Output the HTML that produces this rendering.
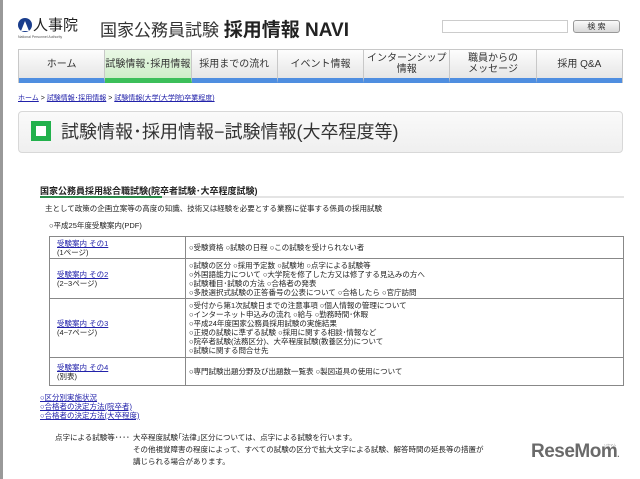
<!DOCTYPE html>
<html><head><meta charset="utf-8"><style>
*{margin:0;padding:0;box-sizing:border-box}
body{width:640px;height:479px;background:#fff;font-family:"Liberation Sans","Noto Sans CJK JP",sans-serif;position:relative;overflow:hidden;color:#222}
.abs{position:absolute}
.lb{position:absolute;left:0;top:0;width:3px;height:479px;background:#999}
.nav{position:absolute;left:18px;top:49px;width:605px;height:34px;display:flex;border:1px solid #c8c8c8;border-bottom:none}
.nav div{flex:1;border-right:1px solid #c8c8c8;background:linear-gradient(#fdfdfd,#e6e6e6);font-size:10px;display:flex;align-items:center;justify-content:center;text-align:center;line-height:11px;border-bottom:5px solid #4f8ee0;color:#333}
.nav div:last-child{border-right:none}
.nav div.on{background:linear-gradient(#eaf8e6,#cfeec9);border-bottom-color:#3cbf5a}
a{color:#2222aa;text-decoration:underline}
table{border-collapse:collapse;position:absolute;left:49px;top:236px;width:575px;font-size:7.5px;line-height:9px;table-layout:fixed}
td{border:1px solid #888;vertical-align:middle;padding:0 3px;overflow:hidden}
td.l{width:136px;padding-left:7px}
</style></head><body>
<div class="lb"></div>
<div class="abs" style="left:18px;top:18px;width:14px;height:14px;border-radius:50%;background:#1a3d8c"></div>
<div class="abs" style="left:21px;top:21px;width:0;height:0;border-left:4px solid transparent;border-right:4px solid transparent;border-bottom:10px solid #fff"></div>
<div class="abs" style="left:33px;top:14px;font-size:15px;color:#222">人事院</div>
<div class="abs" style="left:18px;top:35px;font-size:3.5px;color:#555">National Personnel Authority</div>
<div class="abs" style="left:100px;top:15px;font-size:17px;color:#333;white-space:nowrap">国家公務員試験 <b style="font-size:19px;color:#222">採用情報 NAVI</b></div>
<div class="abs" style="left:442px;top:20px;width:126px;height:13px;border:1px solid #ccc;background:#fff"></div>
<div class="abs" style="left:573px;top:20px;width:47px;height:13px;border:1px solid #999;border-radius:3px;background:linear-gradient(#fafafa,#d8d8d8);font-size:8px;text-align:center;line-height:11px;color:#333">検 索</div>
<div class="nav"><div>ホーム</div><div class="on">試験情報･採用情報</div><div>採用までの流れ</div><div>イベント情報</div><div>インターンシップ<br>情報</div><div>職員からの<br>メッセージ</div><div>採用 Q&amp;A</div></div>
<div class="abs" style="left:18px;top:93px;font-size:7px;white-space:nowrap"><a>ホーム</a> &gt; <a>試験情報･採用情報</a> &gt; <a>試験情報(大学(大学院)卒業程度)</a></div>
<div class="abs" style="left:18px;top:111px;width:605px;height:42px;border:1px solid #d8d8d8;border-radius:4px;background:linear-gradient(#fafafa,#efefef)"></div>
<div class="abs" style="left:31px;top:121px;width:20px;height:20px;background:#22b14c"></div>
<div class="abs" style="left:36px;top:126px;width:10px;height:10px;background:#fff"></div>
<div class="abs" style="left:61px;top:118px;font-size:18px;color:#333;white-space:nowrap">試験情報･採用情報−試験情報(大卒程度等)</div>
<div class="abs" style="left:40px;top:184px;font-size:9px;font-weight:bold;color:#222;white-space:nowrap">国家公務員採用総合職試験(院卒者試験･大卒程度試験)</div>
<div class="abs" style="left:40px;top:196px;width:584px;height:2px;background:#e4e4e4"></div>
<div class="abs" style="left:40px;top:196px;width:122px;height:2px;background:#2a8a4a"></div>
<div class="abs" style="left:45px;top:203px;font-size:7.5px;white-space:nowrap">主として政策の企画立案等の高度の知識、技術又は経験を必要とする業務に従事する係員の採用試験</div>
<div class="abs" style="left:49px;top:220px;font-size:7.5px;white-space:nowrap">○平成25年度受験案内(PDF)</div>
<table>
<tr style="height:22px"><td class="l"><a>受験案内 その1</a><br>(1ページ)</td><td>○受験資格 ○試験の日程 ○この試験を受けられない者</td></tr>
<tr style="height:40px"><td class="l"><a>受験案内 その2</a><br>(2~3ページ)</td><td>○試験の区分 ○採用予定数 ○試験地 ○点字による試験等<br>○外国語能力について ○大学院を修了した方又は修了する見込みの方へ<br>○試験種目･試験の方法 ○合格者の発表<br>○多肢選択式試験の正答番号の公表について ○合格したら ○官庁訪問</td></tr>
<tr style="height:59px"><td class="l"><a>受験案内 その3</a><br>(4~7ページ)</td><td>○受付から第1次試験日までの注意事項 ○個人情報の管理について<br>○インターネット申込みの流れ ○給与 ○勤務時間･休暇<br>○平成24年度国家公務員採用試験の実施結果<br>○正規の試験に準ずる試験 ○採用に関する相談･情報など<br>○院卒者試験(法務区分)、大卒程度試験(教養区分)について<br>○試験に関する問合せ先</td></tr>
<tr style="height:28px"><td class="l"><a>受験案内 その4</a><br>(別表)</td><td>○専門試験出題分野及び出題数一覧表 ○製図道具の使用について</td></tr>
</table>
<div class="abs" style="left:40px;top:393px;font-size:7.5px;line-height:9px"><a>○区分別実施状況</a><br><a>○合格者の決定方法(院卒者)</a><br><a>○合格者の決定方法(大卒程度)</a></div>
<div class="abs" style="left:55px;top:432px;font-size:7.5px;white-space:nowrap">点字による試験等････</div>
<div class="abs" style="left:133px;top:432px;font-size:7.5px;line-height:12px;white-space:nowrap">大卒程度試験｢法律｣区分については、点字による試験を行います。<br>その他視覚障害の程度によって、すべての試験の区分で拡大文字による試験、解答時間の延長等の措置が<br>講じられる場合があります。</div>
<div class="abs" style="left:531px;top:441px;font-size:19px;font-weight:bold;color:#6a6a6a;letter-spacing:-0.5px;white-space:nowrap">ReseMom<span style="font-size:8px">.</span></div>
<div class="abs" style="left:604px;top:443px;font-size:3px;color:#888">リセマム</div>
</body></html>
